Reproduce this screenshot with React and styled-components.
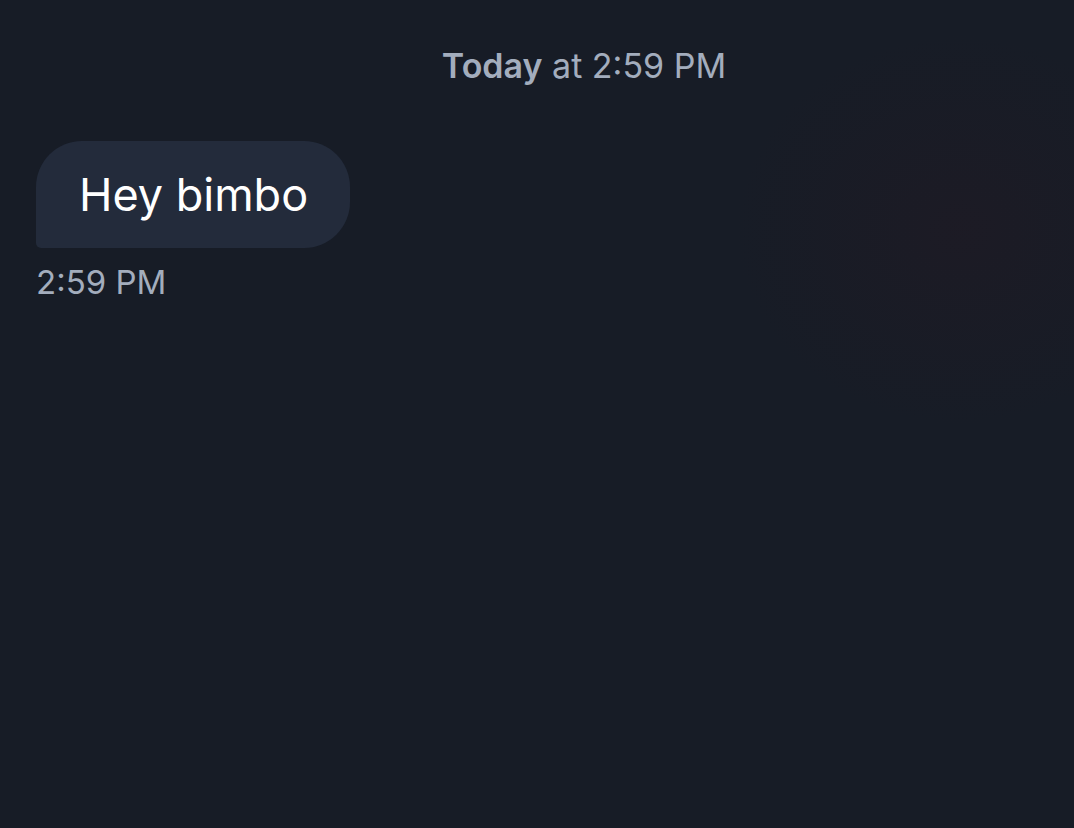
import React from "react";
import styled, { createGlobalStyle } from "styled-components";

const Global = createGlobalStyle`
  html, body {
    margin: 0;
    padding: 0;
    background: #171c26;
  }
  * { box-sizing: border-box; }
`;

const Page = styled.div`
  position: relative;
  width: 100%;
  height: 828px;
  overflow: hidden;
  font-family: Inter, "Liberation Sans", sans-serif;
  background:
    radial-gradient(ellipse 300px 260px at 960px 230px, rgba(32, 26, 36, 0.6), rgba(23, 28, 38, 0) 75%),
    #171c26;
  display: flex;
  flex-direction: column;
  padding: 43px 36px 0 36px;
`;

const DayStamp = styled.div`
  align-self: stretch;
  padding-left: 94px;
  text-align: center;
  font-size: 34px;
  line-height: 46px;
  color: #a3adbd;
  font-weight: 400;

  b {
    font-weight: 600;
  }
`;

const Message = styled.div`
  display: flex;
  flex-direction: column;
  align-items: flex-start;
  margin-top: 52px;
`;

const Bubble = styled.div`
  background: #232b3b;
  color: #ffffff;
  font-size: 45px;
  line-height: 56px;
  padding: 26px 42px 25px 43px;
  border-radius: 46px 46px 46px 5px;
`;

const Time = styled.div`
  margin-top: 14px;
  font-size: 33px;
  line-height: 40px;
  color: #a3adbd;
`;

export default function App() {
  return (
    <Page>
      <Global />
      <DayStamp>
        <b>Today</b> at 2:59 PM
      </DayStamp>
      <Message>
        <Bubble>Hey bimbo</Bubble>
        <Time>2:59 PM</Time>
      </Message>
    </Page>
  );
}
